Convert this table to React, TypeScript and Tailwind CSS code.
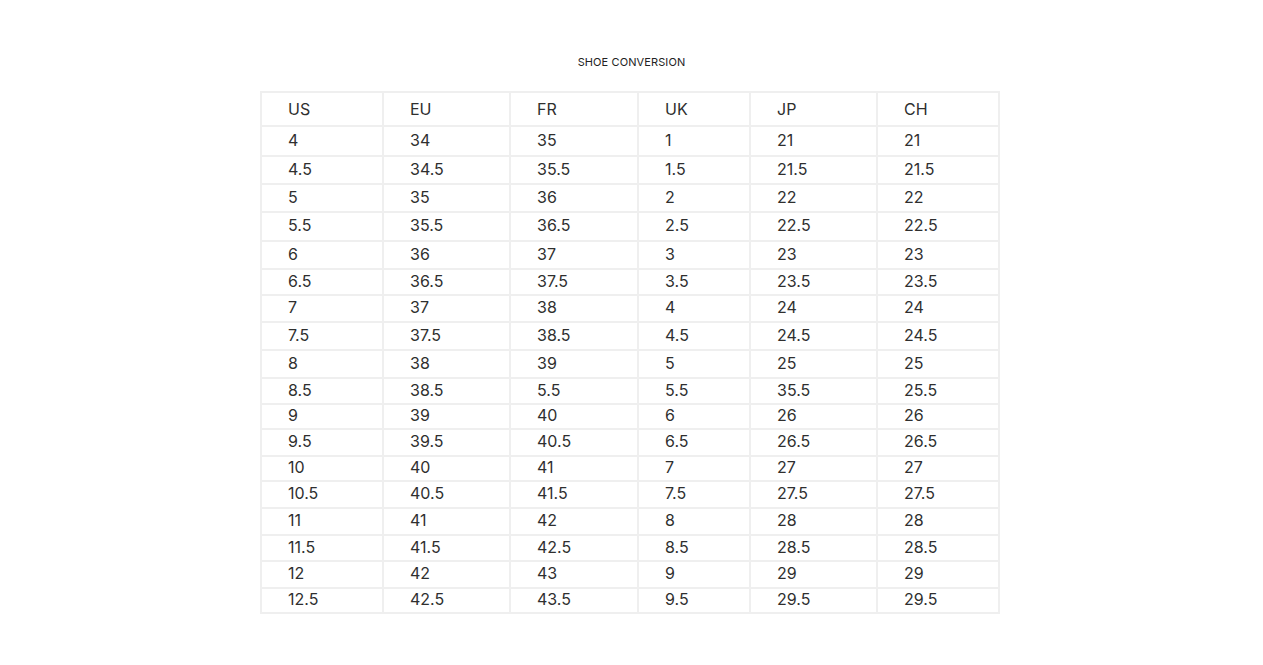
import React from "react";

const rows: { h: string; v: string[] }[] = [
  { h: "h-[30px]", v: ["4", "34", "35", "1", "21", "21"] },
  { h: "h-[28px]", v: ["4.5", "34.5", "35.5", "1.5", "21.5", "21.5"] },
  { h: "h-[28px]", v: ["5", "35", "36", "2", "22", "22"] },
  { h: "h-[29px]", v: ["5.5", "35.5", "36.5", "2.5", "22.5", "22.5"] },
  { h: "h-[28px]", v: ["6", "36", "37", "3", "23", "23"] },
  { h: "h-[26px]", v: ["6.5", "36.5", "37.5", "3.5", "23.5", "23.5"] },
  { h: "h-[27px]", v: ["7", "37", "38", "4", "24", "24"] },
  { h: "h-[28px]", v: ["7.5", "37.5", "38.5", "4.5", "24.5", "24.5"] },
  { h: "h-[28px]", v: ["8", "38", "39", "5", "25", "25"] },
  { h: "h-[26px]", v: ["8.5", "38.5", "5.5", "5.5", "35.5", "25.5"] },
  { h: "h-[25px]", v: ["9", "39", "40", "6", "26", "26"] },
  { h: "h-[27px]", v: ["9.5", "39.5", "40.5", "6.5", "26.5", "26.5"] },
  { h: "h-[25px]", v: ["10", "40", "41", "7", "27", "27"] },
  { h: "h-[27px]", v: ["10.5", "40.5", "41.5", "7.5", "27.5", "27.5"] },
  { h: "h-[27px]", v: ["11", "41", "42", "8", "28", "28"] },
  { h: "h-[26px]", v: ["11.5", "41.5", "42.5", "8.5", "28.5", "28.5"] },
  { h: "h-[27px]", v: ["12", "42", "43", "9", "29", "29"] },
  { h: "h-[25px]", v: ["12.5", "42.5", "43.5", "9.5", "29.5", "29.5"] },
];

const heads = ["US", "EU", "FR", "UK", "JP", "CH"];
const widths = ["w-[122px]", "w-[127px]", "w-[128px]", "w-[112px]", "w-[127px]", "w-[122px]"];

export default function App() {
  return (
    <div
      className="min-h-[665px] w-full bg-white text-[#2f2f2f]"
      style={{ fontFamily: "Inter, 'Liberation Sans', sans-serif" }}
    >
      <div className="pt-[55px] text-center text-[11px] leading-[14px] tracking-[0.01em] text-[#222]">
        SHOE CONVERSION
      </div>
      <div className="mt-[22px] flex justify-center pr-[3px]">
        <table className="w-[739px] table-fixed border-collapse border-2 border-[#efefef] text-[16px] leading-[20px]">
          <colgroup>
            {widths.map((w, i) => (
              <col key={i} className={w} />
            ))}
          </colgroup>
          <thead>
            <tr className="h-[34px]">
              {heads.map((h) => (
                <th
                  key={h}
                  className="border-2 border-[#efefef] pl-[26px] pb-[1px] text-left align-middle font-normal"
                >
                  {h}
                </th>
              ))}
            </tr>
          </thead>
          <tbody>
            {rows.map((r, i) => (
              <tr key={i} className={r.h}>
                {r.v.map((c, j) => (
                  <td
                    key={j}
                    className="border-2 border-[#efefef] pt-0 pb-[3px] pl-[26px] align-middle"
                  >
                    {c}
                  </td>
                ))}
              </tr>
            ))}
          </tbody>
        </table>
      </div>
    </div>
  );
}
